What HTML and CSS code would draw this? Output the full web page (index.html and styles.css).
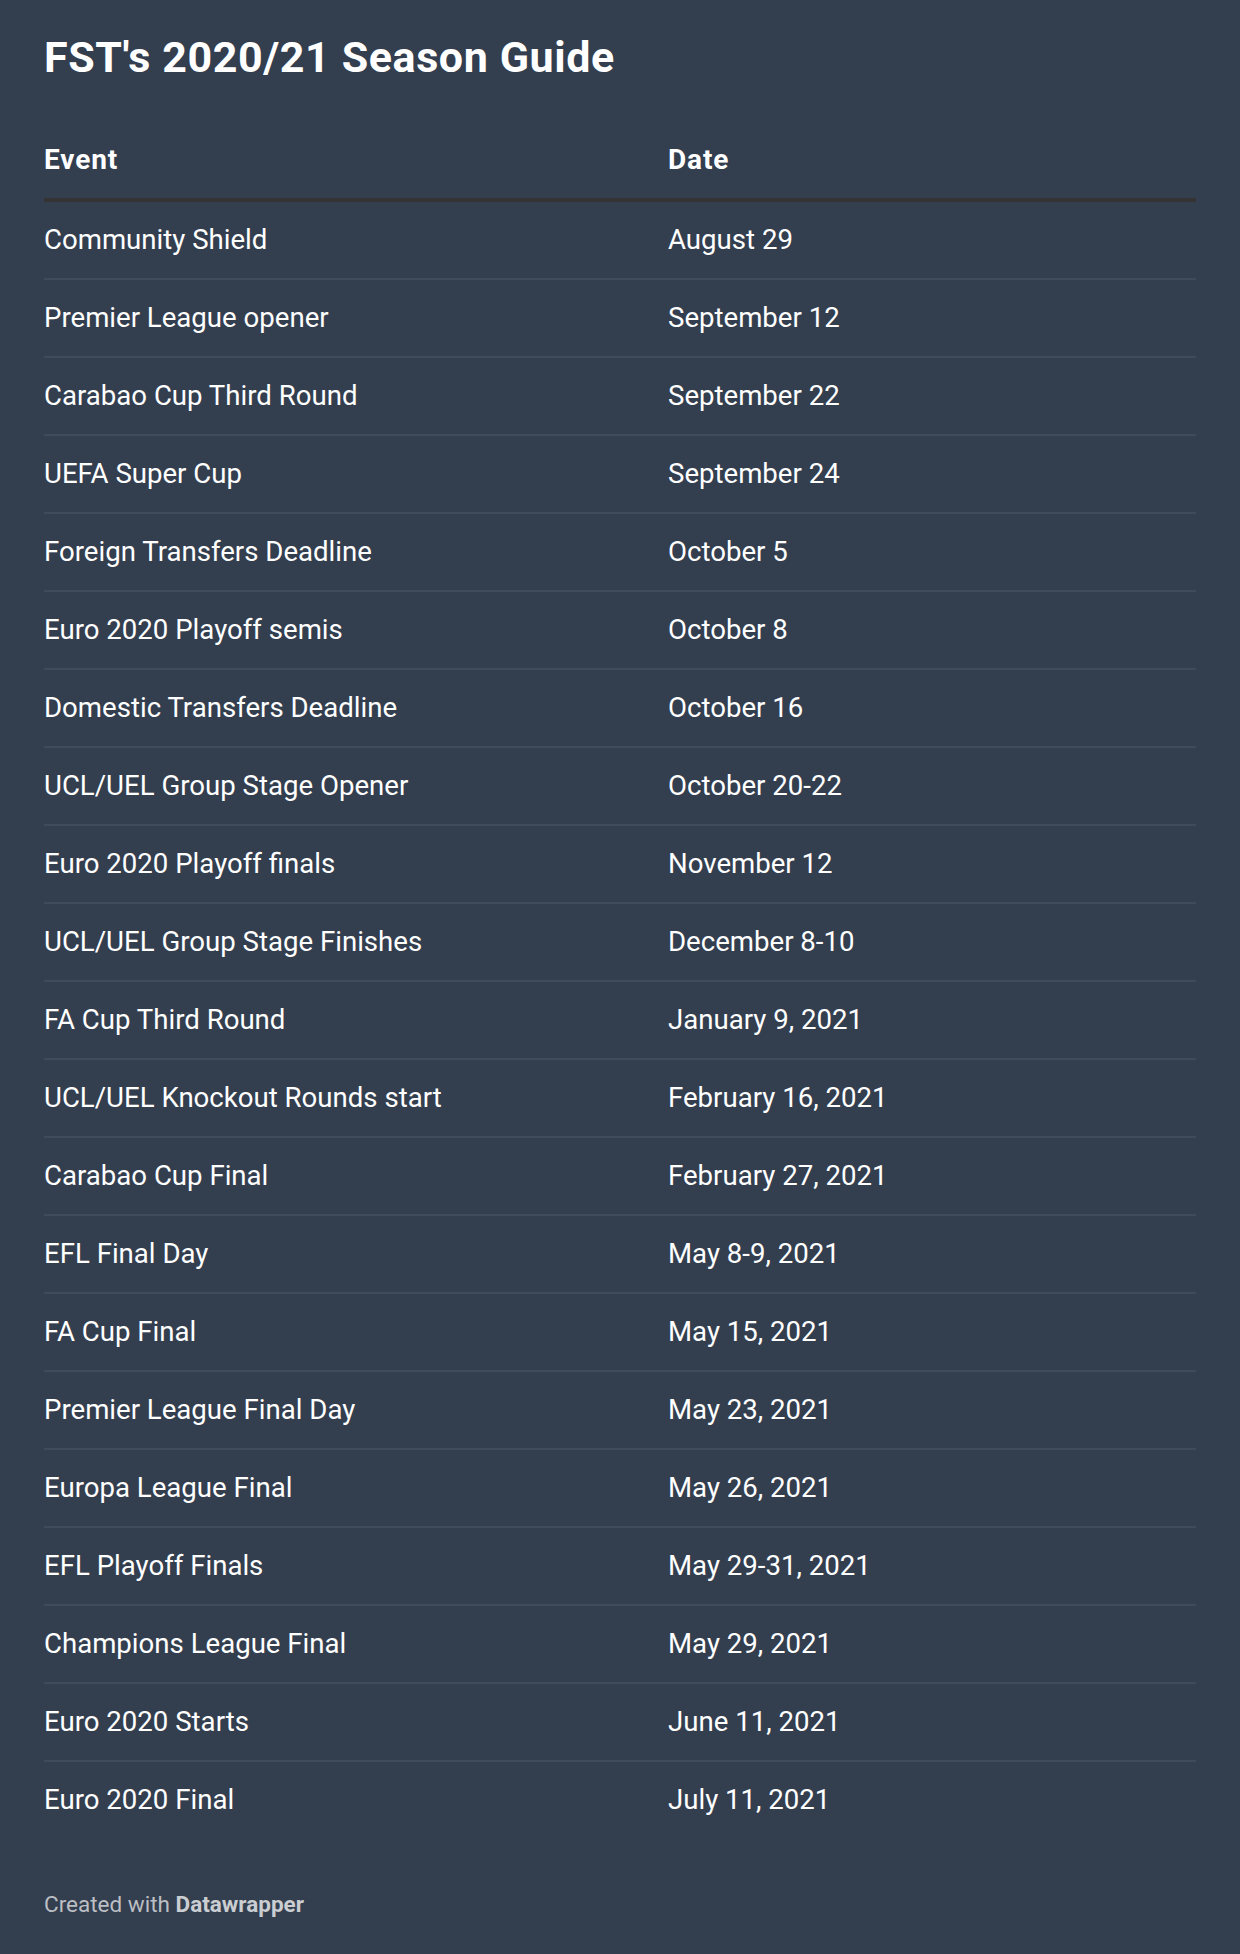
FILE: index.html
```html
<!DOCTYPE html>
<html lang="en">
<head>
<meta charset="utf-8">
<title>FST's 2020/21 Season Guide</title>
<link rel="stylesheet" href="styles.css">
</head>
<body>
<div class="chart">
  <h1 class="title">FST's 2020/21 Season Guide</h1>
  <div class="table">
    <div class="row head"><div class="cell">Event</div><div class="cell">Date</div></div>
    <div class="row"><div class="cell">Community Shield</div><div class="cell">August 29</div></div>
    <div class="row"><div class="cell">Premier League opener</div><div class="cell">September 12</div></div>
    <div class="row"><div class="cell">Carabao Cup Third Round</div><div class="cell">September 22</div></div>
    <div class="row"><div class="cell">UEFA Super Cup</div><div class="cell">September 24</div></div>
    <div class="row"><div class="cell">Foreign Transfers Deadline</div><div class="cell">October 5</div></div>
    <div class="row"><div class="cell">Euro 2020 Playoff semis</div><div class="cell">October 8</div></div>
    <div class="row"><div class="cell">Domestic Transfers Deadline</div><div class="cell">October 16</div></div>
    <div class="row"><div class="cell">UCL/UEL Group Stage Opener</div><div class="cell">October 20-22</div></div>
    <div class="row"><div class="cell">Euro 2020 Playoff finals</div><div class="cell">November 12</div></div>
    <div class="row"><div class="cell">UCL/UEL Group Stage Finishes</div><div class="cell">December 8-10</div></div>
    <div class="row"><div class="cell">FA Cup Third Round</div><div class="cell">January 9, 2021</div></div>
    <div class="row"><div class="cell">UCL/UEL Knockout Rounds start</div><div class="cell">February 16, 2021</div></div>
    <div class="row"><div class="cell">Carabao Cup Final</div><div class="cell">February 27, 2021</div></div>
    <div class="row"><div class="cell">EFL Final Day</div><div class="cell">May 8-9, 2021</div></div>
    <div class="row"><div class="cell">FA Cup Final</div><div class="cell">May 15, 2021</div></div>
    <div class="row"><div class="cell">Premier League Final Day</div><div class="cell">May 23, 2021</div></div>
    <div class="row"><div class="cell">Europa League Final</div><div class="cell">May 26, 2021</div></div>
    <div class="row"><div class="cell">EFL Playoff Finals</div><div class="cell">May 29-31, 2021</div></div>
    <div class="row"><div class="cell">Champions League Final</div><div class="cell">May 29, 2021</div></div>
    <div class="row"><div class="cell">Euro 2020 Starts</div><div class="cell">June 11, 2021</div></div>
    <div class="row last"><div class="cell">Euro 2020 Final</div><div class="cell">July 11, 2021</div></div>
  </div>
  <div class="footer">Created with <b>Datawrapper</b></div>
</div>
</body>
</html>
```

FILE: styles.css
```css
html {
  background: #333e4f;
}
body {
  margin: 0;
  background: #333e4f;
  font-family: Roboto, "Liberation Sans", sans-serif;
  color: #ffffff;
}
.chart {
  padding: 32px 44px 0 44px;
  min-height: 1922px;
}
.title {
  margin: 0;
  font-size: 43px;
  line-height: 51.6px;
  font-weight: 700;
  letter-spacing: 0.6px;
  color: #ffffff;
}
.table {
  margin-top: 58.4px;
  display: flex;
  flex-direction: column;
}
.row {
  display: grid;
  grid-template-columns: 624px 1fr;
  padding: 20px 0;
  font-size: 27.6px;
  line-height: 36px;
  border-bottom: 2px solid #3f4a5b;
}
.row.head {
  padding-top: 0;
  font-size: 28px;
  font-weight: 700;
  letter-spacing: 0.9px;
  border-bottom: 4px solid #333333;
}
.row.last {
  border-bottom: none;
}
.footer {
  margin-top: 51px;
  font-size: 22.5px;
  line-height: 30px;
  color: #bcbfc4;
}
.footer b {
  font-weight: 700;
  color: #cacdd1;
}
```
